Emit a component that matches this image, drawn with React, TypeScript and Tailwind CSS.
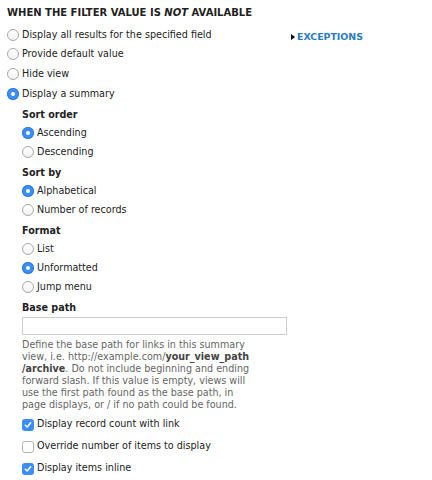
import React from "react";

type Option = { label: string; checked?: boolean };

function Radio({ checked }: { checked?: boolean }) {
  if (checked) {
    return (
      <span className="flex h-[12px] w-[12px] shrink-0 items-center justify-center rounded-full bg-[#3a8ef6] shadow-[inset_0_0_0_1px_#2f7ee6]">
        <span className="h-[4px] w-[4px] rounded-full bg-white" />
      </span>
    );
  }
  return (
    <span className="h-[12px] w-[12px] shrink-0 rounded-full border border-[#a9a9a9] bg-gradient-to-b from-white to-[#f1f1f1]" />
  );
}

function Checkbox({ checked }: { checked?: boolean }) {
  if (checked) {
    return (
      <span className="flex h-[12px] w-[12px] shrink-0 items-center justify-center rounded-[3px] bg-[#3a8ef6]">
        <svg width="8" height="8" viewBox="0 0 8 8" fill="none">
          <path d="M1.3 4.2 L3.2 6 L6.7 1.8" stroke="white" strokeWidth="1.5" strokeLinecap="round" strokeLinejoin="round" />
        </svg>
      </span>
    );
  }
  return <span className="h-[12px] w-[12px] shrink-0 rounded-[3px] border border-[#b3b3b3] bg-white" />;
}

function RadioRow({ label, checked, h }: Option & { h: string }) {
  return (
    <div className={`flex items-center gap-[3px] ${h}`}>
      <Radio checked={checked} />
      <span>{label}</span>
    </div>
  );
}

function RadioGroup({ title, options }: { title: string; options: Option[] }) {
  return (
    <div className="mt-[3px]">
      <div className="flex h-[17px] items-center font-bold">{title}</div>
      {options.map((o) => (
        <RadioRow key={o.label} {...o} h="h-[19px]" />
      ))}
    </div>
  );
}

export default function App() {
  const topOptions: Option[] = [
    { label: "Display all results for the specified field" },
    { label: "Provide default value" },
    { label: "Hide view" },
    { label: "Display a summary", checked: true },
  ];

  return (
    <div className="h-[480px] w-[432px] bg-white pl-[7px] font-['DejaVu_Sans',sans-serif] text-[9.6px] text-[#222]">
      <div className="flex h-[25px] items-center text-[10px] font-bold text-[#222]">
        WHEN THE FILTER VALUE IS&nbsp;<em>NOT</em>&nbsp;AVAILABLE
      </div>

      <div className="flex">
        <div className="w-[284px]">
          {topOptions.map((o) => (
            <RadioRow key={o.label} {...o} h="h-[19.67px]" />
          ))}
        </div>
        <div className="mt-[6px] flex h-[12px] items-center gap-[2px]">
          <span className="h-0 w-0 border-y-[3px] border-l-[4px] border-y-transparent border-l-black" />
          <span className="text-[9.4px] font-bold text-[#2a7bc6]">EXCEPTIONS</span>
        </div>
      </div>

      <div className="pl-[15px]">
        <RadioGroup
          title="Sort order"
          options={[{ label: "Ascending", checked: true }, { label: "Descending" }]}
        />
        <RadioGroup
          title="Sort by"
          options={[{ label: "Alphabetical", checked: true }, { label: "Number of records" }]}
        />
        <RadioGroup
          title="Format"
          options={[{ label: "List" }, { label: "Unformatted", checked: true }, { label: "Jump menu" }]}
        />

        <div className="mt-[3px]">
          <div className="flex h-[17px] items-center font-bold">Base path</div>
          <input
            type="text"
            className="block h-[18px] w-[265px] border border-[#cfcfcf] bg-white outline-none"
          />
          <p className="mt-[4px] w-[270px] leading-[12px] text-[#666]">
            Define the base path for links in this summary
            <br />
            view, i.e. http://example.com/<strong className="text-[#444]">your_view_path</strong>
            <br />
            <strong className="text-[#444]">/archive</strong>. Do not include beginning and ending
            <br />
            forward slash. If this value is empty, views will
            <br />
            use the first path found as the base path, in
            <br />
            page displays, or / if no path could be found.
          </p>
        </div>

        <div className="mt-[3px]">
          {[
            { label: "Display record count with link", checked: true },
            { label: "Override number of items to display" },
            { label: "Display items inline", checked: true },
          ].map((c) => (
            <div key={c.label} className="flex h-[22px] items-center gap-[3px]">
              <Checkbox checked={c.checked} />
              <span>{c.label}</span>
            </div>
          ))}
        </div>
      </div>
    </div>
  );
}
